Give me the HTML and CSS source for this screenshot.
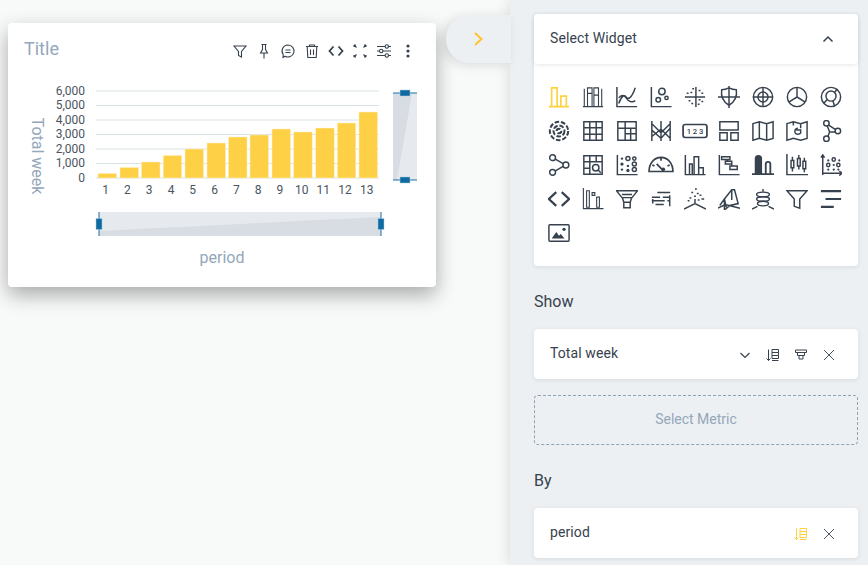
FILE: index.html
```html
<!DOCTYPE html>
<html lang="en">
<head>
    <meta charset="UTF-8">
    <title>Widget editor</title>
    <link rel="stylesheet" href="styles.css">
</head>
<body>
    <main class="canvas">
        <div class="widget">
            <div class="widget-head">
                <h2 class="widget-title">Title</h2>
                <div class="widget-tools">
                    <svg class="tool" viewBox="0 0 16 16"><path d="M2 3h12L9.500 8.500V14l-3-1.500V8.500z"/></svg>
                    <svg class="tool" viewBox="0 0 16 16"><path d="M5.500 1.500h5M6.500 1.500v5L4.500 10h7L9.500 6.500v-5M8 10v5.500"/></svg>
                    <svg class="tool" viewBox="0 0 16 16"><path d="M8 2a6 6 0 1 1-3 11.200L3 14.500l.2-3A6 6 0 0 1 8 2zM5.500 7h5M5.500 9.500h5"/></svg>
                    <svg class="tool" viewBox="0 0 16 16"><path d="M2 3.500h12M5.500 3.500V2h5v1.500M3.200 3.500l.6 11h8.400l.6-11M6.500 6.500v5.500M9.500 6.500v5.500"/></svg>
                    <svg class="tool tool-bold" viewBox="0 0 16 16"><path d="M5.500 3.500 1.500 8l4 4.500M10.500 3.500l4 4.500-4 4.500"/></svg>
                    <svg class="tool" viewBox="0 0 16 16"><path d="M2 2l2.500 2.500M14 2l-2.500 2.500M2 14l2.500-2.500M14 14l-2.500-2.500M2 2h2M2 2v2M14 2h-2M14 2v2M2 14h2M2 14v-2M14 14h-2M14 14v-2"/></svg>
                    <svg class="tool" viewBox="0 0 16 16"><path d="M1 3.500h8M12.500 3.500H15M1 8h2.500M7 8h8M1 12.500h8M12.500 12.500H15"/><circle cx="10.800" cy="3.500" r="1.700"/><circle cx="5.200" cy="8" r="1.700"/><circle cx="10.800" cy="12.500" r="1.700"/></svg>
                    <svg class="tool tool-fill" viewBox="0 0 16 16"><circle cx="8" cy="3" r="1.600"/><circle cx="8" cy="8" r="1.600"/><circle cx="8" cy="13" r="1.600"/></svg>
                </div>
            </div>
            <svg class="chart" viewBox="0 0 428 192">
                <g class="grid">
                    <path d="M88 13h283M88 27.500h283M88 42h283M88 56.500h283M88 71h283M88 85.500h283M88 100h283"/>
                </g>
                <g class="bars">
                    <rect x="90" y="95.500" width="18.500" height="4.500"/>
                    <rect x="112" y="89.500" width="18.500" height="10.500"/>
                    <rect x="133.500" y="84" width="18.500" height="16"/>
                    <rect x="155.200" y="77.500" width="18.500" height="22.500"/>
                    <rect x="177" y="71" width="18.500" height="29"/>
                    <rect x="199" y="65" width="18.500" height="35"/>
                    <rect x="220.500" y="59" width="18.500" height="41"/>
                    <rect x="242" y="57" width="18.500" height="43"/>
                    <rect x="264" y="51" width="18.500" height="49"/>
                    <rect x="285.700" y="54" width="18.500" height="46"/>
                    <rect x="307.700" y="50" width="18.500" height="50"/>
                    <rect x="329.300" y="45" width="18.500" height="55"/>
                    <rect x="351" y="34" width="18.500" height="66"/>
                </g>
                <g class="y-ticks">
                    <text x="77" y="16.500">6,000</text>
                    <text x="77" y="31">5,000</text>
                    <text x="77" y="45.500">4,000</text>
                    <text x="77" y="60">3,000</text>
                    <text x="77" y="74.500">2,000</text>
                    <text x="77" y="89">1,000</text>
                    <text x="77" y="103.500">0</text>
                </g>
                <g class="x-ticks">
                    <text x="97.500" y="116">1</text>
                    <text x="119.300" y="116">2</text>
                    <text x="141" y="116">3</text>
                    <text x="163" y="116">4</text>
                    <text x="184.700" y="116">5</text>
                    <text x="206.500" y="116">6</text>
                    <text x="228.300" y="116">7</text>
                    <text x="250" y="116">8</text>
                    <text x="271.800" y="116">9</text>
                    <text x="293.700" y="116">10</text>
                    <text x="315.300" y="116">11</text>
                    <text x="337" y="116">12</text>
                    <text x="358.800" y="116">13</text>
                </g>
                <text class="axis-name" transform="translate(24 78) rotate(90)">Total week</text>
                <text class="axis-name" x="214" y="185">period</text>

                <!-- vertical zoom -->
                <rect class="zoom-bg" x="385" y="15" width="24" height="87"/>
                <path class="zoom-data" d="M385 15h19L389 102h-4z"/>
                <path class="zoom-line" d="M385 15h24M385 102h24"/>
                <rect class="zoom-handle" x="392" y="12" width="10" height="6"/>
                <rect class="zoom-handle" x="392" y="99" width="10" height="6"/>

                <!-- horizontal zoom -->
                <rect class="zoom-bg" x="91" y="134" width="282" height="24"/>
                <path class="zoom-data" d="M91 153 373 139v19H91z"/>
                <path class="zoom-line" d="M91 134v24M373 134v24"/>
                <rect class="zoom-handle" x="88" y="140.500" width="6" height="11"/>
                <rect class="zoom-handle" x="370" y="140.500" width="6" height="11"/>
            </svg>
        </div>
    </main>

    <aside class="panel">
        <button class="panel-toggle">
            <svg viewBox="0 0 16 16"><path d="M5 2l6.500 6L5 14"/></svg>
        </button>

        <section class="card picker">
            <div class="picker-head">
                <span class="label">Select Widget</span>
                <svg class="row-icon head-icon" viewBox="0 0 16 16"><path d="M3.500 10.500 8 6l4.500 4.500"/></svg>
            </div>
            <div class="picker-grid">
                <svg class="chart-type active" viewBox="0 0 24 24"><path d="M1 22.500h22M4 22.500V2h6v20.500M14 22.500V11h6v11.500"/></svg>
                <svg class="chart-type thin" viewBox="0 0 24 24"><path d="M1 22.500h22M2.500 22V3M6 22V2h5v20M6 8h5M13 22V2h5v20M13 10h5M21.500 22V3"/></svg>
                <svg class="chart-type" viewBox="0 0 24 24"><path d="M1 1v21.500h22M3 19c3-8 6-10 8-7s6 2 10-10M3 13c3-4 6-3 8 0s6 6 10 3"/></svg>
                <svg class="chart-type" viewBox="0 0 24 24"><path d="M1.500 1v21.500h22"/><circle cx="13" cy="6" r="3.500"/><circle cx="9" cy="15" r="2.500"/><circle cx="18" cy="13" r="1.800"/></svg>
                <svg class="chart-type" viewBox="0 0 24 24"><path d="M13 1v22M1 12h22M7 7h2M3 8h2M9 3h2M16 5h2M19 8h2M5 16h2M8 19h2M16 15h2M19 17h2M15 20h2"/></svg>
                <svg class="chart-type" viewBox="0 0 24 24"><path d="M4 4c3 0 6-1 8-2 2 1 5 2 8 2 1 7-1 13-8 17C5 17 3 11 4 4zM0 12h24M12 0v24"/></svg>
                <svg class="chart-type" viewBox="0 0 24 24"><circle cx="12" cy="12" r="10.500"/><circle cx="12" cy="12" r="5.500"/><path d="M12 1v22M1 12h22"/></svg>
                <svg class="chart-type" viewBox="0 0 24 24"><circle cx="12" cy="12" r="10.500"/><path d="M12 1.500V12l9 5.500M12 12l-9 5.500"/></svg>
                <svg class="chart-type" viewBox="0 0 24 24"><circle cx="12" cy="12" r="10.500"/><circle cx="12" cy="11" r="5.500"/><path d="M16 7l3-4M7.500 15 4 19M14 16l2 6"/></svg>

                <svg class="chart-type dashed" viewBox="0 0 24 24"><circle cx="12" cy="12" r="10"/><circle cx="12" cy="12" r="6"/><circle cx="12" cy="12" r="2.500"/></svg>
                <svg class="chart-type" viewBox="0 0 24 24"><path d="M2 2h20v20H2zM8.500 2v20M15.500 2v20M2 8.500h20M2 15.500h20"/></svg>
                <svg class="chart-type" viewBox="0 0 24 24"><path d="M2 2h20v20H2zM2 9h20M10 2v20M10 15h12M16 9v13"/></svg>
                <svg class="chart-type" viewBox="0 0 24 24"><path d="M2 1v22M12 1v22M22 1v22M2 4l10 10 10-10M2 18l10-8 10 10M2 11l10 9 10-11"/></svg>
                <svg class="chart-type wide" viewBox="0 0 24 24"><rect x="1" y="6" width="22" height="12" rx="2"/><text class="num" x="12" y="15">1 2 3</text></svg>
                <svg class="chart-type" viewBox="0 0 24 24"><path d="M2 2h20v9H2zM2 14h8v8H2zM14 14h8v8h-8z"/></svg>
                <svg class="chart-type" viewBox="0 0 24 24"><path d="M1 4l7-2 8 2 7-2v18l-7 2-8-2-7 2zM8 2v18M16 4v18"/></svg>
                <svg class="chart-type" viewBox="0 0 24 24"><path d="M1 4l7-2 8 2 7-2v18l-7 2-8-2-7 2zM16 4v5M8 2v4M11 11h5v3c-1 2-5 2-6 0s0-5 3-5"/></svg>
                <svg class="chart-type" viewBox="0 0 24 24"><circle cx="7" cy="3.500" r="3"/><circle cx="19.500" cy="12" r="3"/><circle cx="7" cy="20.500" r="3"/><path d="M8 6.500l2.500 6.500-2 5M9.500 5.500l7.500 5M10.500 13h6"/></svg>

                <svg class="chart-type" viewBox="0 0 24 24"><circle cx="5" cy="4" r="3.200"/><circle cx="19.500" cy="12" r="3.200"/><circle cx="5" cy="20" r="3.200"/><path d="M8 5.500l8.500 5M16.500 13.500 8 18.500"/></svg>
                <svg class="chart-type" viewBox="0 0 24 24"><path d="M2 2h20v20H2zM2 8.500h20M8.500 2v20M15.500 2v6.500M2 15.500h6.500"/><circle cx="15" cy="15" r="3.500"/><path d="M17.500 17.500 20.500 20.500"/></svg>
                <svg class="chart-type" viewBox="0 0 24 24"><path d="M1.500 1v21.500h22"/><circle cx="6.500" cy="5" r="1.300" class="dot"/><circle cx="13" cy="5" r="2.200"/><circle cx="20" cy="5" r="1.800"/><circle cx="6.500" cy="11" r="1.800" class="dot"/><circle cx="13" cy="13" r="1.300" class="dot"/><circle cx="20" cy="11" r="2.200"/><circle cx="6.500" cy="17" r="1.300" class="dot"/><circle cx="13" cy="18" r="1.800" class="dot"/><circle cx="20" cy="17" r="2.200"/></svg>
                <svg class="chart-type wide" viewBox="0 0 24 24"><path d="M1 18C1 10 6 5 12 5s11 5 11 13zM4 12l2 1M12 5v3M20 12l-2 1M8 11l5 5"/><circle cx="14" cy="16" r="1.800" class="dot"/></svg>
                <svg class="chart-type" viewBox="0 0 24 24"><path d="M1.500 1v21.500h22M6 22V11h3v11M11 22V3h5v19M16 22V15h5v7"/></svg>
                <svg class="chart-type" viewBox="0 0 24 24"><path d="M1.500 1v21.500h22M4 3h9v3H4zM8 8h7v3H8zM13 13h8v4h-8zM10 6v2M15 11v2"/></svg>
                <svg class="chart-type" viewBox="0 0 24 24"><path class="solid" d="M0 21h24v2H0zM3 21V5a4 4 0 0 1 8 0v16zM14 21V11a3.500 3.500 0 0 1 7 0v10h-2V11a1.500 1.500 0 0 0-3 0v10z"/></svg>
                <svg class="chart-type" viewBox="0 0 24 24"><path d="M1 0v22.500h23M7 3v16M14 1v16M20 4v16"/><path class="capsule" d="M5.500 7h3v8h-3zM12.500 5h3v8h-3zM18.500 8h3v8h-3z"/></svg>
                <svg class="chart-type" viewBox="0 0 24 24"><path d="M3 23V1M1 4l2-3 2 3M3 21h20M21 18.500l3 2.500-3 2.500"/><circle cx="9" cy="7" r="1.200" class="dot"/><circle cx="15" cy="6" r="1.800"/><circle cx="21" cy="7" r="1.200" class="dot"/><circle cx="9" cy="12" r="1.800"/><circle cx="15" cy="12" r="1.200" class="dot"/><circle cx="20" cy="12" r="1.800"/><circle cx="9" cy="17" r="1.200" class="dot"/><circle cx="15" cy="17" r="1.200" class="dot"/><circle cx="20" cy="17" r="1.200" class="dot"/></svg>

                <svg class="chart-type tool-bold" viewBox="0 0 24 24"><path d="M9 4.500l-8 7.500 8 7.500M15 4.500l8 7.500-8 7.500"/></svg>
                <svg class="chart-type thin" viewBox="0 0 24 24"><path d="M1.500 0v22.500h22M5 3h3v18H5zM11 5h3v3h-3zM16 10h3v11h-3z"/></svg>
                <svg class="chart-type" viewBox="0 0 24 24"><path d="M0.500 3h23l-6 7.500H6.500zM6.500 7h11M7 10.500h10l-1.500 5h-7zM8.500 15.500h7v6h-7z"/></svg>
                <svg class="chart-type" viewBox="0 0 24 24"><path d="M8 5h14M2 10h9M14 10h8M2 14h14M19 14h3M6 18h9M21.500 8v12M3 12v5"/></svg>
                <svg class="chart-type" viewBox="0 0 24 24"><path d="M0 23l12-6 12 6M12 17v-5M8 5h2M12 1h2M14 6h2M11 9h2M17 8h2M6 11h2M19 12h3M15 13h2M4 14h2"/></svg>
                <svg class="chart-type" viewBox="0 0 24 24"><path d="M0 22l8-4 16 4M7 12 15 2h3l4 15-9 2-6 5zM7 12l2 9M15 2v11M2 19l5-7"/></svg>
                <svg class="chart-type" viewBox="0 0 24 24"><path d="M0 23l6-3M24 23l-6-3M12 1v3"/><ellipse cx="12" cy="7" rx="7" ry="2.500"/><ellipse cx="12" cy="12" rx="7" ry="2.500"/><ellipse cx="12" cy="17" rx="6" ry="2.500"/></svg>
                <svg class="chart-type" viewBox="0 0 24 24"><path d="M1 3h22l-8 9v10l-6-2v-8z"/></svg>
                <svg class="chart-type tool-bold" viewBox="0 0 24 24"><path d="M1 3.500h22M6 12h17M1 20.500h14"/></svg>

                <svg class="chart-type" viewBox="0 0 24 24"><rect x="1" y="3" width="22" height="18" rx="1"/><path class="solid" d="M4 18l5-7 3 4 2-2 4 5z"/><circle cx="17.500" cy="8" r="1.800" class="dot"/></svg>
            </div>
        </section>

        <h3 class="section-title">Show</h3>
        <div class="card row">
            <span class="label">Total week</span>
            <div class="row-actions">
                <svg class="row-icon chevron" viewBox="0 0 16 16"><path d="M3.500 6 8 10.500 12.500 6"/></svg>
                <svg class="row-icon sort" viewBox="0 0 16 16"><path d="M3.500 2.500v11M1.500 11.500l2 2 2-2M7 2.500h6.500v3H7zM7 5.500h6.500v3H7zM7 8.500h6.500v3H7zM7 13.500h6.500"/></svg>
                <svg class="row-icon filter" viewBox="0 0 16 16"><path d="M2.500 3h11v2.500h-11zM4.500 5.500v3h7v-3M6 8.500v3.500h4V8.500"/></svg>
                <svg class="row-icon close" viewBox="0 0 16 16"><path d="M3 3l10 10M13 3 3 13"/></svg>
            </div>
        </div>
        <div class="drop-slot">Select Metric</div>

        <h3 class="section-title">By</h3>
        <div class="card row">
            <span class="label">period</span>
            <div class="row-actions">
                <svg class="row-icon sort on" viewBox="0 0 16 16"><path d="M3.500 2.500v11M1.500 11.500l2 2 2-2M7 2.500h6.500v3H7zM7 5.500h6.500v3H7zM7 8.500h6.500v3H7zM7 13.500h6.500"/></svg>
                <svg class="row-icon close" viewBox="0 0 16 16"><path d="M3 3l10 10M13 3 3 13"/></svg>
            </div>
        </div>
    </aside>
</body>
</html>
```

FILE: styles.css
```css
* {
    box-sizing: border-box;
}

html, body {
    height: 100%;
}

body {
    margin: 0;
    display: flex;
    overflow: hidden;
    font-family: Roboto, "Liberation Sans", sans-serif;
    color: #37424e;
    background-color: #f8f9f9;
}

.canvas {
    width: 510px;
    flex: none;
    padding: 23px 0 0 8px;
}

.widget {
    width: 428px;
    height: 264px;
    background: #fff;
    border-radius: 4px;
    box-shadow: 0 8px 20px rgba(0,0,0,0.32);
}

.widget-head {
    display: flex;
    justify-content: space-between;
    height: 58px;
    padding: 14px 20px 0 16px;
}

.widget-title {
    margin: 0;
    font-size: 18px;
    font-weight: 400;
    line-height: 24px;
    color: #94a7bb;
}

.widget-tools {
    display: flex;
    gap: 8px;
    padding-top: 6px;
}

.tool {
    width: 16px;
    height: 16px;
    fill: none;
    stroke: #37424e;
    stroke-width: 1.1;
}

.tool.tool-bold {
    stroke-width: 1.800;
}

.tool-fill {
    fill: #37424e;
    stroke: none;
}

.chart {
    display: block;
    width: 428px;
    height: 192px;
    margin-top: -3px;
    font-family: Roboto, "Liberation Sans", sans-serif;
}

.grid path {
    fill: none;
    stroke: #d9e3e3;
}

.bars rect {
    fill: #fed045;
    stroke: #fff0c4;
    stroke-width: 0.5;
}

.y-ticks text {
    font-size: 12px;
    fill: #4b5560;
    text-anchor: end;
}

.x-ticks text {
    font-size: 12px;
    fill: #4b5560;
    text-anchor: middle;
}

.axis-name {
    font-size: 16px;
    fill: #94a7bb;
    text-anchor: middle;
}

.zoom-bg {
    fill: #e6e9ed;
}

.zoom-data {
    fill: #d8dce3;
}

.zoom-line {
    fill: none;
    stroke: #1673a6;
}

.zoom-handle {
    fill: #0f6a9f;
    stroke: #a9cbe0;
    stroke-width: 0.5;
}

.panel {
    position: relative;
    width: 358px;
    flex: none;
    padding: 14px 10px 0 24px;
    background-color: #edf0f2;
    box-shadow: 0 0 14px rgba(0,0,0,0.14);
}

.panel-toggle {
    position: absolute;
    top: 15px;
    left: -64px;
    width: 65px;
    height: 48px;
    padding: 0;
    border: 0;
    border-radius: 24px 0 0 24px;
    background-color: #edf0f2;
    box-shadow: -4px 2px 12px rgba(0,0,0,0.12);
}

.panel-toggle svg {
    display: block;
    width: 16px;
    height: 16px;
    margin-left: 24px;
    fill: none;
    stroke: #fcc52e;
    stroke-width: 2;
}

.card {
    background: #fff;
    border-radius: 4px;
    box-shadow: 0 1px 4px rgba(120,135,150,0.2);
}

.label {
    font-size: 14px;
    letter-spacing: 0.1px;
    color: #37424e;
}

.picker {
    height: 252px;
}

.picker-head {
    display: flex;
    align-items: center;
    justify-content: space-between;
    height: 50px;
    padding: 0 22px 2px 16px;
    border-radius: 4px;
    box-shadow: 0 1px 4px rgba(120,135,150,0.2);
}

.picker-grid {
    display: grid;
    grid-template-columns: repeat(9, 34px);
    grid-auto-rows: 34px;
    justify-items: center;
    align-items: center;
    padding: 16px 0 0 8px;
}

.chart-type {
    width: 22px;
    height: 22px;
    fill: none;
    stroke: #37424e;
    stroke-width: 1.600;
}

.chart-type.wide {
    width: 26px;
    height: 26px;
}

.chart-type.thin {
    stroke-width: 1.200;
}

.chart-type.tool-bold {
    stroke-width: 2.400;
}

.chart-type.active {
    stroke: #fed13f;
    stroke-width: 1.800;
}

.chart-type.dashed {
    stroke-dasharray: 5 2;
    stroke-width: 2.200;
}

.chart-type .solid,
.chart-type .dot {
    fill: #37424e;
    stroke: none;
}

.chart-type .capsule {
    fill: #fff;
}

.chart-type .num {
    font-size: 7px;
    font-weight: 500;
    fill: #37424e;
    stroke: none;
    text-anchor: middle;
}

.row-icon {
    width: 16px;
    height: 16px;
    fill: none;
    stroke: #37424e;
    stroke-width: 1.200;
}

.head-icon {
    stroke-width: 1.500;
    margin-top: 2px;
}

.section-title {
    margin: 26px 0 18px;
    font-size: 16px;
    font-weight: 400;
    line-height: 19px;
}

.row {
    display: flex;
    align-items: center;
    justify-content: space-between;
    height: 50px;
    padding: 0 21px 2px 16px;
}

.row-actions {
    display: flex;
    align-items: center;
    gap: 12px;
    padding-top: 3px;
}

.sort,
.filter {
    stroke-width: 1;
}

.close {
    stroke-width: 0.900;
}

.sort.on {
    stroke: #fed13f;
}

.drop-slot {
    height: 50px;
    margin-top: 16px;
    border: 1px dashed #8fa2b5;
    border-radius: 4px;
    text-align: center;
    font-size: 14px;
    line-height: 46px;
    color: #94a7bb;
}
```
